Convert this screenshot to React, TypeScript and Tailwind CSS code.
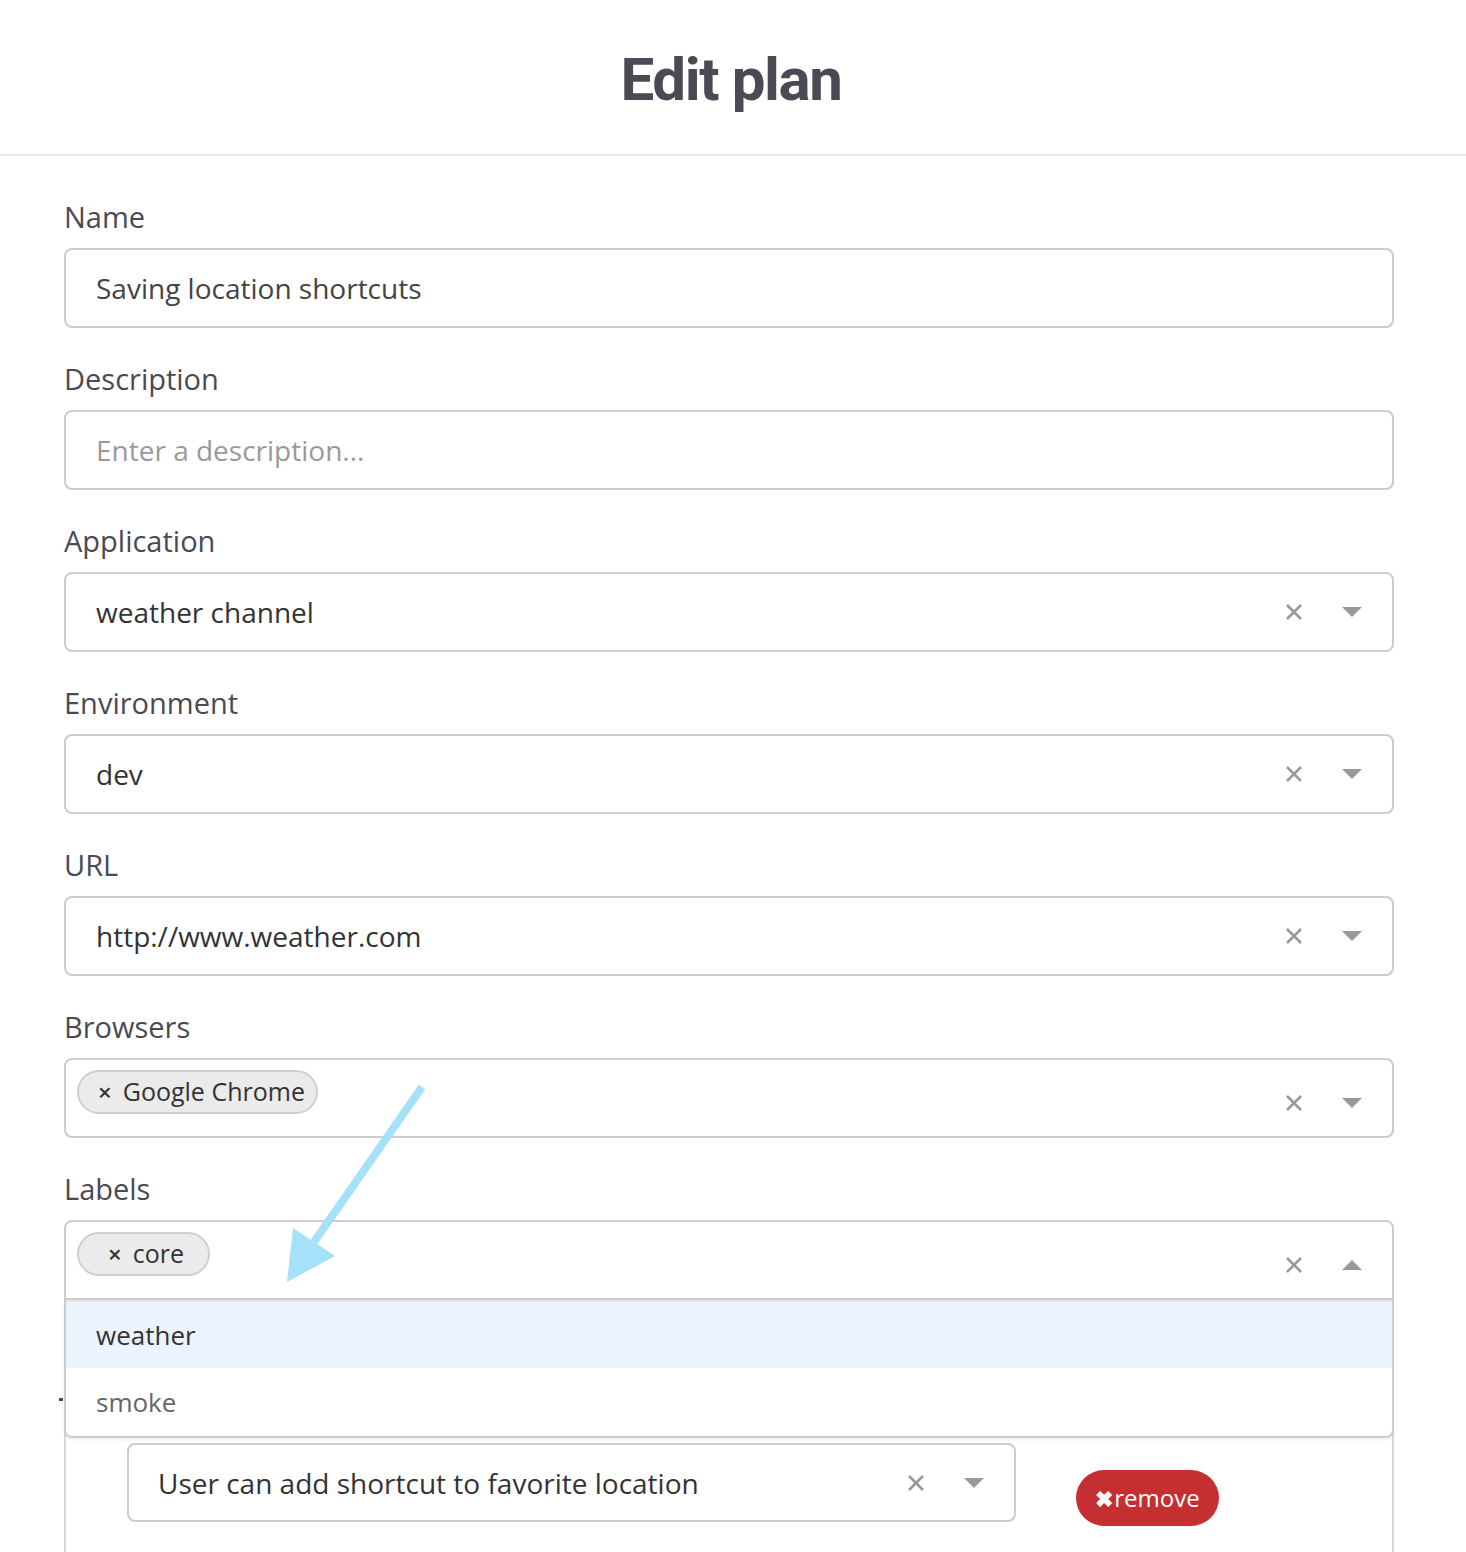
import React from "react";

function ClearIcon() {
  return (
    <svg width="18" height="18" viewBox="0 0 18 18" className="shrink-0">
      <path d="M2 2 L16 16 M16 2 L2 16" stroke="#999" strokeWidth="2.6" />
    </svg>
  );
}

function Caret({ up = false }: { up?: boolean }) {
  return (
    <svg width="20" height="10" viewBox="0 0 20 10" className="shrink-0">
      {up ? <path d="M0 10 L10 0 L20 10 Z" fill="#999" /> : <path d="M0 0 L20 0 L10 10 Z" fill="#999" />}
    </svg>
  );
}

function Label({ children }: { children: React.ReactNode }) {
  return <label className="block text-[29px] leading-[40px] text-[#4a4a55] mb-[11px]">{children}</label>;
}

function Tag({ text, className = "" }: { text: string; className?: string }) {
  return (
    <span
      className={`inline-flex items-center h-[44px] rounded-full border-2 border-[#cfcfcf] bg-[#ebebeb] text-[25px] text-[#333] ${className}`}
    >
      <span className="text-[24px] font-semibold mr-[11px]">×</span>
      {text}
    </span>
  );
}

function SelectBox({
  children,
  open = false,
  tags = false,
}: {
  children: React.ReactNode;
  open?: boolean;
  tags?: boolean;
}) {
  return (
    <div
      className={`flex h-[80px] border-2 border-[#cccccc] bg-white ${open ? "rounded-t-lg" : "rounded-lg"} ${
        tags ? "items-start pt-[9px] pl-[11px]" : "items-center pl-[30px]"
      }`}
    >
      <div className="flex-1 text-[28px] text-[#333]">{children}</div>
      <div className={`flex items-center gap-[39px] pr-[30px] ${tags ? "self-center mt-[1px]" : ""}`}>
        <ClearIcon />
        <Caret up={open} />
      </div>
    </div>
  );
}

export default function App() {
  return (
    <div className="relative min-h-[1552px] overflow-hidden bg-white font-['Open_Sans',sans-serif]">
      <header className="h-[156px] border-b-2 border-[#ececec] flex items-center justify-center">
        <h1 className="text-[60px] font-bold text-[#4a4a55] font-['Roboto',sans-serif] tracking-[-1.4px] mt-[6px] -ml-[4px]">
          Edit plan
        </h1>
      </header>

      <main className="pl-16 pr-[72px] pt-[41px]">
        <div className="mb-[31px]">
          <Label>Name</Label>
          <div className="h-[80px] flex items-center pl-[30px] border-2 border-[#cccccc] rounded-lg text-[28px] text-[#444]">
            Saving location shortcuts
          </div>
        </div>

        <div className="mb-[31px]">
          <Label>Description</Label>
          <div className="h-[80px] flex items-center pl-[30px] border-2 border-[#cccccc] rounded-lg text-[28px] text-[#999]">
            Enter a description...
          </div>
        </div>

        <div className="mb-[31px]">
          <Label>Application</Label>
          <SelectBox>weather channel</SelectBox>
        </div>

        <div className="mb-[31px]">
          <Label>Environment</Label>
          <SelectBox>dev</SelectBox>
        </div>

        <div className="mb-[31px]">
          <Label>URL</Label>
          <SelectBox>http://www.weather.com</SelectBox>
        </div>

        <div className="mb-[31px]">
          <Label>Browsers</Label>
          <SelectBox tags>
            <Tag text="Google Chrome" className="pl-[19px] pr-[11px]" />
          </SelectBox>
        </div>

        <div className="relative z-10">
          <Label>Labels</Label>
          <div className="relative">
            <SelectBox open tags>
              <Tag text="core" className="pl-[29px] pr-[24px]" />
            </SelectBox>
            <div className="absolute left-0 right-0 top-full border-2 border-t-0 border-[#cccccc] rounded-b-lg bg-white shadow-[0_2px_3px_rgba(0,0,0,0.06)]">
              <div className="border-t-2 border-[#e6e6e6] h-[68px] flex items-center pl-[30px] bg-[#ebf4fe] text-[26px] text-[#333]">
                weather
              </div>
              <div className="h-[68px] flex items-center pl-[30px] text-[26px] text-[#666]">smoke</div>
            </div>
          </div>
        </div>

        <div className="h-[121px] flex items-start pt-[98px]">
          <span className="block w-[4px] h-[3px] bg-[#4a4a55] -ml-[5px]" />
        </div>

        <div className="border-x-2 border-[#d6d6d6] pt-[22px] pb-[40px] pl-[61px] flex items-start">
          <div className="w-[889px] h-[79px] flex items-center pl-[29px] border-2 border-[#cccccc] rounded-lg">
            <div className="flex-1 text-[28px] text-[#333]">User can add shortcut to favorite location</div>
            <div className="flex items-center gap-[39px] pr-[30px]">
              <ClearIcon />
              <Caret />
            </div>
          </div>
          <button className="ml-[60px] mt-[27px] h-[56px] w-[143px] justify-center rounded-full bg-[#c62f32] text-white text-[24px] flex items-center">
            <span className="font-bold text-[22px] mr-[1px]">✖</span>remove
          </button>
        </div>
      </main>

      <svg className="absolute left-0 top-0 z-20 pointer-events-none" width="1466" height="1552">
        <line x1="422" y1="1087" x2="314" y2="1242" stroke="#a6e1fa" strokeWidth="8" />
        <polygon points="287,1282 293,1228 335,1256" fill="#a6e1fa" />
      </svg>
    </div>
  );
}
